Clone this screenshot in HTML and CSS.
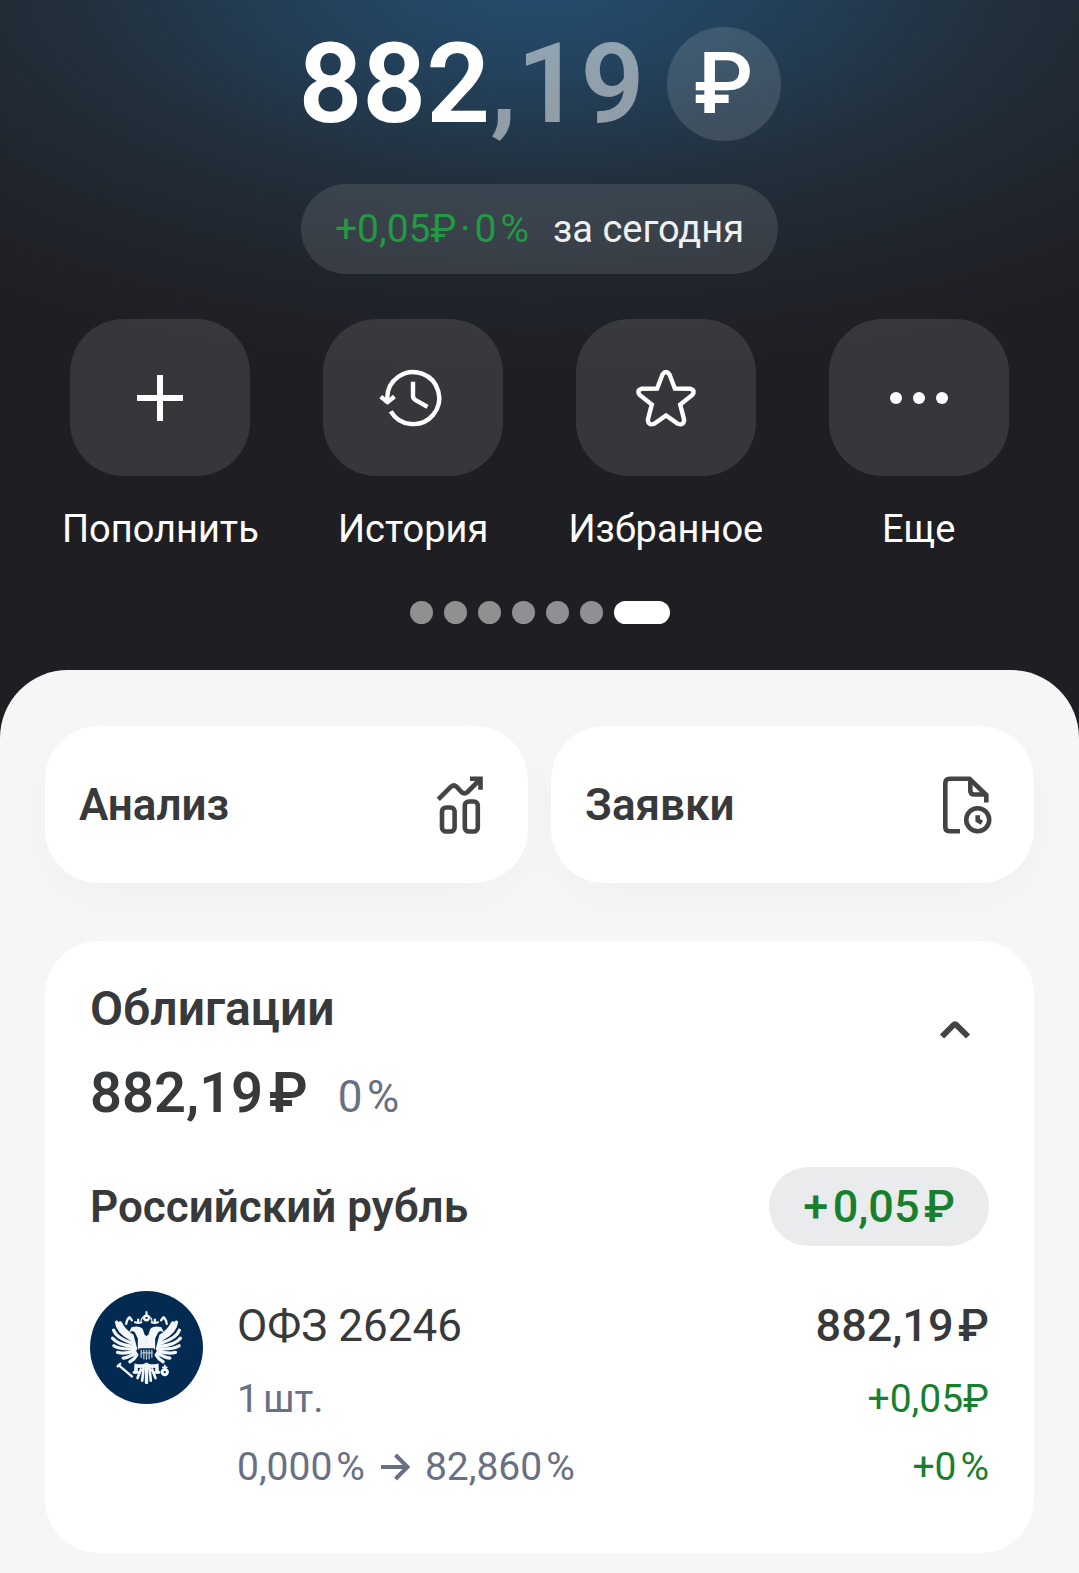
FILE: index.html
```html
<!DOCTYPE html>
<html lang="ru">
<head>
<meta charset="utf-8">
<meta name="viewport" content="width=device-width, initial-scale=1">
<title>Портфель</title>
<link rel="stylesheet" href="styles.css">
</head>
<body>
<div class="page">
  <header class="hero">
    <div class="balance">
      <h1 class="balance-sum">882<span class="balance-cents">,19</span></h1>
      <button class="currency" type="button" aria-label="Валюта">₽</button>
    </div>
    <button class="today" type="button"><span class="today-gain">+0,05₽&#8202;·&#8202;0&#8202;%</span><span>за сегодня</span></button>
    <nav class="actions" aria-label="Действия">
      <button class="action" type="button">
        <span class="action-tile">
          <svg class="action-icon" viewBox="0 0 66 66"><path d="M33 10v46M10 33h46" stroke-width="6"/></svg>
        </span>
        <span>Пополнить</span>
      </button>
      <button class="action" type="button">
        <span class="action-tile">
          <svg class="action-icon" viewBox="0 0 66 66" stroke-width="4.4"><path d="M7.2 36V33A26 26 0 1 1 10.8 46.3"/><path d="M.8 31.6l6.5 5.6 7.2-5.6" stroke-linejoin="round"/><path d="M33 16.7V31q0 2.500 2.200 3.800L47.500 41.800"/></svg>
        </span>
        <span>История</span>
      </button>
      <button class="action" type="button">
        <span class="action-tile">
          <svg class="action-icon" viewBox="0 0 66 66" stroke-width="4.4"><path d="M29.500 9.500Q33 4.500 36.500 9.500L41.900 23.500L57.500 23.800Q63 25.500 59 30.200L47.200 39.500L51.200 55Q50.500 61 44.800 58.800L33 50.500L21.200 58.800Q15.500 61 14.800 55L18.800 39.500L7 30.200Q3 25.500 8.500 23.800L24.100 23.500Z"/></svg>
        </span>
        <span>Избранное</span>
      </button>
      <button class="action" type="button">
        <span class="action-tile">
          <svg class="action-icon" viewBox="0 0 66 66"><g fill="#fff" stroke="none"><circle cx="10" cy="33" r="6"/><circle cx="33" cy="33" r="6"/><circle cx="56" cy="33" r="6"/></g></svg>
        </span>
        <span>Еще</span>
      </button>
    </nav>
    <div class="pager" aria-hidden="true">
      <i class="dot"></i><i class="dot"></i><i class="dot"></i><i class="dot"></i><i class="dot"></i><i class="dot"></i><i class="dot dot-active"></i>
    </div>
  </header>

  <main class="sheet">
    <div class="shortcuts">
      <a class="shortcut" href="#analysis">Анализ
        <svg class="shortcut-icon" viewBox="0 0 60 60"><path d="M8.300 24.300L20.500 12.200Q23.500 9 26.800 12L31.500 17Q34.500 19.800 37.500 17L50 4.500"/><path d="M40 3.700H50.500V14.800"/><rect x="12" y="32.500" width="12.600" height="24" rx="4"/><rect x="34.800" y="26.500" width="13" height="30" rx="4"/></svg>
      </a>
      <a class="shortcut" href="#orders">Заявки
        <svg class="shortcut-icon" viewBox="0 0 60 60"><path d="M24 56.200H13.500Q9.300 56.200 9.300 52V8Q9.300 3.800 13.500 3.800H33.500L50.300 20V27.500"/><path d="M34.300 4V15.500Q34.300 19.500 38.300 19.500H50.300"/><circle cx="41.700" cy="44.800" r="11.500"/><path d="M41.700 40.300V45.200L45.800 47.800"/></svg>
      </a>
    </div>

    <section class="card">
      <div class="card-head">
        <div>
          <h2 class="card-title">Облигации</h2>
          <p class="card-total"><strong>882,19&#8202;₽</strong><span class="card-share">0&#8202;%</span></p>
        </div>
        <button class="collapse" type="button" aria-label="Свернуть">
          <svg class="collapse-icon" viewBox="0 0 40 40"><path d="M7 26.500L18 15.500Q20 13.500 22 15.500L33 26.500"/></svg>
        </button>
      </div>
      <div class="group">
        <h3 class="group-title">Российский рубль</h3>
        <span class="group-gain">+&#8202;0,05&#8202;₽</span>
      </div>
      <a class="asset" href="#ofz-26246">
        <svg class="asset-logo" viewBox="29 64 340 340" aria-hidden="true">
          <circle cx="199" cy="234" r="170" fill="#032b52"/>
          <g id="half" fill="none" stroke="#f4f7fa" stroke-linecap="round">
            <path fill="#f4f7fa" stroke="none" d="M147 187l7-14q24-7 34 6l5 16 7 6v38h-27v-32l-9-18-6-5z"/>
            <g stroke-width="10">
              <path d="M109 158Q112 186 149 206"/>
              <path d="M100 182Q108 204 150 219"/>
              <path d="M97 206Q112 225 154 230"/>
              <path d="M101 229Q120 240 160 238"/>
              <path d="M112 249Q132 254 162 245"/>
              <path d="M129 266Q146 264 166 250"/>
              <path d="M149 277Q162 270 170 256"/>
            </g>
            <path stroke-width="14" d="M119 162Q129 184 154 200L164 238"/>
            <path stroke-width="7" d="M138 163q2-14 10-20M149 144l6 8M165 158q10 4 18 0M174 150v4"/>
            <path stroke-width="4" d="M183 152q4-12 14-13"/>
            <path stroke-width="11" d="M196 287q-12 5-28 2l-1 18"/>
            <path stroke-width="8" d="M198 284v56M190 296l-4 38M182 300l-10 26M161 309h12"/>
          </g>
          <use href="#half" transform="matrix(-1 0 0 1 398 0)"/>
          <g fill="none" stroke="#f4f7fa" stroke-linecap="round">
            <circle cx="199" cy="145" r="7" stroke-width="7"/>
            <path stroke-width="6" d="M199 127v12"/>
            <path stroke-width="7" d="M115 287l40 34M112 291l8-8"/>
            <circle cx="254" cy="308" r="8" stroke-width="9"/>
            <path stroke-width="5" d="M254 288v12M248 294h12"/>
          </g>
          <path d="M177 236h45v28q-5 8-22.500 10q-17.500-2-22.500-10z" fill="#032b52"/>
          <path d="M183 241v24M191 241v28M199 241v30M207 241v28M215 241v24M181 250h37" fill="none" stroke="#b4c3d2" stroke-width="4"/>
        </svg>
        <span class="asset-info">
          <span class="asset-name">ОФЗ 26246</span>
          <span class="asset-note">1&#8202;шт.</span>
          <span class="asset-note asset-price">0,000&#8202;%<svg class="arrow" viewBox="0 0 32 32" role="img" aria-label="стала"><path d="M2 16H28M16.500 4L28.500 16L16.500 28"/></svg>82,860&#8202;%</span>
        </span>
        <span class="asset-value">
          <strong class="asset-sum">882,19&#8202;₽</strong>
          <span class="asset-gain">+0,05₽</span>
          <span class="asset-gain">+0&#8202;%</span>
        </span>
      </a>
    </section>
  </main>
</div>
</body>
</html>
```
FILE: styles.css
```css
* {
  box-sizing: border-box;
}

body {
  margin: 0;
  font-family: Roboto, "Noto Sans", sans-serif;
  font-size: 39px;
  line-height: 48px;
  color: #38393b;
  background: #1f1e22;
}

h1, h2, h3, p {
  margin: 0;
  font-weight: 600;
}

strong {
  font-weight: 500;
}

button {
  margin: 0;
  padding: 0;
  border: 0;
  background: none;
  font: inherit;
  color: inherit;
}

a {
  color: inherit;
  text-decoration: none;
}

svg {
  display: block;
  flex: none;
  overflow: visible;
}

.page {
  display: flex;
  flex-direction: column;
  min-height: 100vh;
  background: radial-gradient(ellipse 84% 400px at 50% -20px, #254e70 0%, #23435e 22%, #222f3c 52%, #20242b 78%, #1f1e22 100%) #1f1e22;
}

/* Balance and quick actions */

.hero {
  display: flex;
  flex-direction: column;
  align-items: center;
  padding: 27px 34px 46px;
  color: #fff;
}

.balance {
  display: flex;
  align-items: center;
  gap: 22px;
}

.balance-sum {
  font-size: 112px;
  line-height: 114px;
}

.balance-cents {
  color: rgba(255, 255, 255, 0.5);
}

.currency {
  width: 114px;
  height: 114px;
  border-radius: 50%;
  background: rgba(255, 255, 255, 0.13);
  font-size: 86px;
  font-weight: 500;
  line-height: 114px;
}

.today {
  display: flex;
  align-items: center;
  gap: 24px;
  height: 90px;
  margin-top: 43px;
  padding: 0 34px;
  border-radius: 45px;
  background: rgba(255, 255, 255, 0.11);
  color: #eef0f2;
  font-size: 38px;
}

.today-gain {
  color: #219a41;
  font-size: 39px;
}

.actions {
  display: grid;
  grid-template-columns: repeat(4, 1fr);
  align-self: stretch;
  margin-top: 45px;
}

.action {
  display: flex;
  flex-direction: column;
  align-items: center;
  gap: 29px;
  font-size: 38px;
}

.action-tile {
  display: flex;
  align-items: center;
  justify-content: center;
  width: 180px;
  height: 157px;
  border-radius: 54px;
  background: rgba(255, 255, 255, 0.11);
}

.action-icon {
  width: 66px;
  height: 66px;
  fill: none;
  stroke: #fff;
}

.pager {
  display: flex;
  gap: 11px;
  margin-top: 48px;
}

.dot {
  width: 23px;
  height: 23px;
  border-radius: 12px;
  background: #908f92;
}

.dot-active {
  width: 56px;
  background: #fff;
}

/* Light sheet */

.sheet {
  flex: 1;
  padding: 56px 45px 21px;
  border-radius: 68px 68px 0 0;
  background: #f6f6f6;
}

.shortcuts {
  display: grid;
  grid-template-columns: 1fr 1fr;
  gap: 23px;
}

.shortcut {
  display: flex;
  align-items: center;
  justify-content: space-between;
  height: 157px;
  padding: 0 38px 0 34px;
  border-radius: 54px;
  background: #fff;
  box-shadow: 0 16px 48px rgba(0, 0, 0, 0.025);
  font-size: 44px;
  font-weight: 600;
}

.shortcut-icon {
  width: 60px;
  height: 60px;
  fill: none;
  stroke: #434446;
  stroke-width: 4.6;
}

.card {
  margin-top: 58px;
  padding: 38px 45px 52px;
  border-radius: 54px;
  background: #fff;
}

.card-head {
  display: flex;
  align-items: flex-start;
  justify-content: space-between;
}

.card-title {
  font-size: 48px;
  line-height: 60px;
}

.card-total {
  display: flex;
  align-items: baseline;
  gap: 30px;
  margin-top: 18px;
  font-size: 56px;
  line-height: 72px;
}

.card-share {
  font-size: 44px;
  font-weight: 400;
  color: #697084;
}

.card-total strong {
  font-weight: 600;
}

.collapse {
  margin-top: 17px;
  padding: 14px;
}

.collapse-icon {
  width: 40px;
  height: 40px;
  fill: none;
  stroke: #434446;
  stroke-width: 6;
}

.group {
  display: flex;
  align-items: center;
  justify-content: space-between;
  margin-top: 34px;
}

.group-title {
  font-size: 44px;
}

.group-gain {
  padding: 0 34px;
  border-radius: 40px;
  background: #e9ebec;
  color: #17802f;
  font-size: 45px;
  font-weight: 500;
  line-height: 79px;
}

.asset {
  display: flex;
  align-items: flex-start;
  margin-top: 45px;
}

.asset-logo {
  width: 113px;
  height: 113px;
}

.asset-info,
.asset-value {
  display: flex;
  flex-direction: column;
  line-height: 68px;
}

.asset-info {
  flex: 1;
  margin-left: 34px;
}

.asset-value {
  align-items: flex-end;
}

.asset-name,
.asset-sum {
  margin-bottom: 4px;
  font-size: 44px;
  line-height: 70px;
}

.asset-sum {
  font-size: 45px;
}

.asset-note {
  color: #697084;
}

.asset-price {
  display: flex;
  align-items: center;
  gap: 14px;
}

.arrow {
  width: 32px;
  height: 32px;
  fill: none;
  stroke: #697084;
  stroke-width: 4;
}

.asset-gain {
  color: #17802f;
}
```
